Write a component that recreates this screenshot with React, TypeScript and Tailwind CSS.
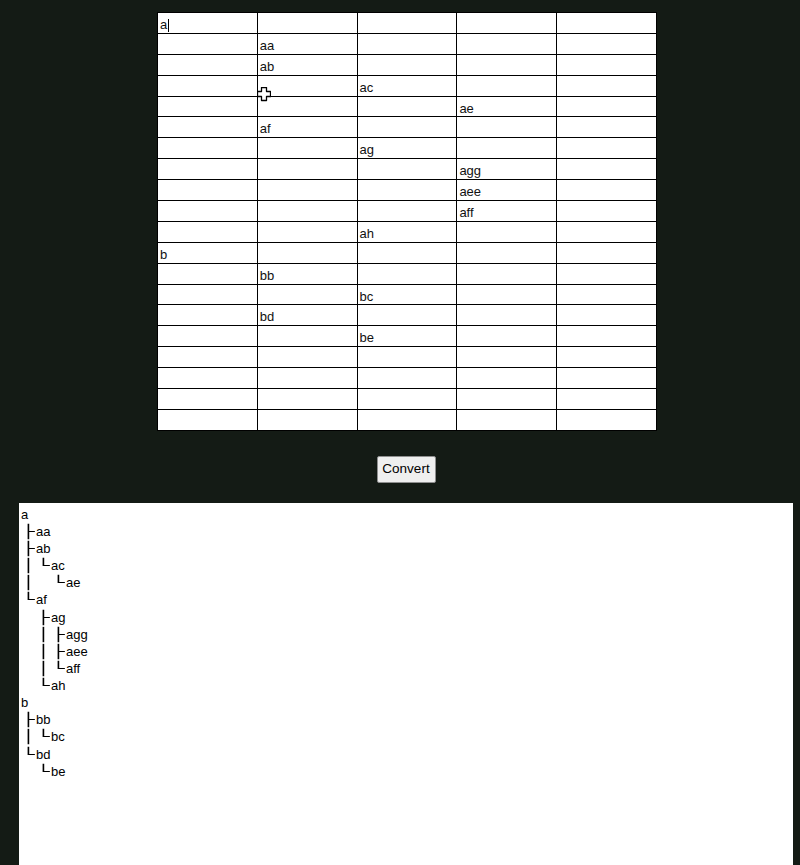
import React from 'react'

// row -> column + label typed into the grid
const rows: [number, string][] = [
  [0, 'a'],
  [1, 'aa'],
  [1, 'ab'],
  [2, 'ac'],
  [3, 'ae'],
  [1, 'af'],
  [2, 'ag'],
  [3, 'agg'],
  [3, 'aee'],
  [3, 'aff'],
  [2, 'ah'],
  [0, 'b'],
  [1, 'bb'],
  [2, 'bc'],
  [1, 'bd'],
  [2, 'be'],
]

// converted tree: prefix glyphs per level + label
const tree: [string[], string][] = [
  [[], 'a'],
  [['├'], 'aa'],
  [['├'], 'ab'],
  [['│', '└'], 'ac'],
  [['│', ' ', '└'], 'ae'],
  [['└'], 'af'],
  [[' ', '├'], 'ag'],
  [[' ', '│', '├'], 'agg'],
  [[' ', '│', '├'], 'aee'],
  [[' ', '│', '└'], 'aff'],
  [[' ', '└'], 'ah'],
  [[], 'b'],
  [['├'], 'bb'],
  [['│', '└'], 'bc'],
  [['└'], 'bd'],
  [[' ', '└'], 'be'],
]

const TOTAL_ROWS = 20

export default function App() {
  return (
    <div className="relative min-h-[865px] bg-[#141b15] pt-[12px] overflow-hidden" style={{ fontFamily: '"Liberation Sans", Arial, sans-serif' }}>
      {/* grid of inputs */}
      <div className="ml-[157px] w-[500px] border-t border-l border-black bg-white">
        {Array.from({ length: TOTAL_ROWS }).map((_, r) => {
          const row = rows[r]
          return (
            <div key={r} className="flex h-[20.9px]">
              {[0, 1, 2, 3, 4].map(c => (
                <div key={c} className="w-[100px] border-r border-b border-black pl-[2px] pt-[2px] text-[13px] leading-[20px] text-[#111] flex items-start">
                  {row && row[0] === c ? row[1] : ''}
                  {r === 0 && c === 0 && <span className="inline-block w-px h-[13px] bg-black ml-[1px] mt-[4px]" />}
                </div>
              ))}
            </div>
          )
        })}
      </div>

      <div className="flex justify-center ml-[156px] w-[500px] mt-[25px]">
        <button className="h-[27px] w-[59px] bg-[#efefef] border border-[#8f8f8f] rounded-[2px] text-[13.5px] text-black">
          Convert
        </button>
      </div>

      {/* output */}
      <div className="ml-[19px] mt-[20px] w-[774px] h-[400px] bg-white pl-[2px] pt-[3px] text-[13px] leading-[17px] text-black">
        {tree.map(([prefix, label], i) => (
          <div key={i} className="flex h-[17.13px] whitespace-pre">
            {prefix.map((g, j) => (
              <span key={j} className="w-[15px] shrink-0 pl-[4px]">
                <span
                  className="inline-block text-[13px] leading-[17px] text-black scale-x-[1.6] origin-[4px_50%] [will-change:transform]"
                  style={{ fontFamily: '"DejaVu Sans", sans-serif' }}
                >
                  {g}
                </span>
              </span>
            ))}
            <span>{label}</span>
          </div>
        ))}
      </div>

      {/* mouse pointer over the grid */}
      <svg className="absolute left-[257px] top-[87px]" width="14" height="15" viewBox="0 0 14 15">
        <polygon points="4.5,0.5 9.5,0.5 9.5,4.5 13.5,4.5 13.5,9.5 9.5,9.5 9.5,13.5 4.5,13.5 4.5,9.5 0.5,9.5 0.5,4.5 4.5,4.5" fill="#fff" stroke="#000" strokeWidth="1.3" strokeLinejoin="round" />
      </svg>
    </div>
  )
}
